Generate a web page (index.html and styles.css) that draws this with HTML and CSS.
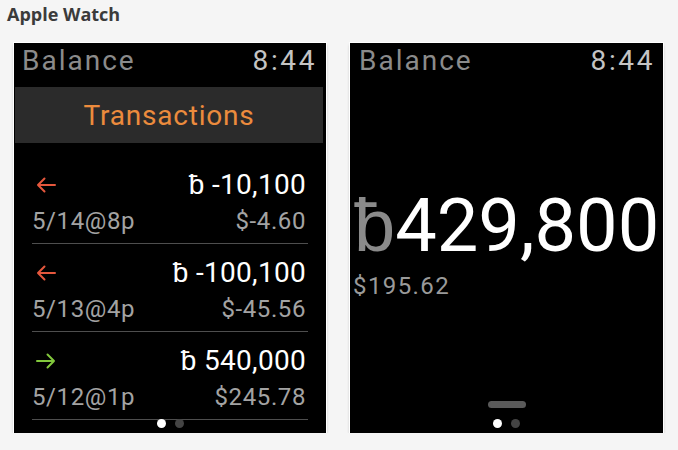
FILE: index.html
```html
<!DOCTYPE html>
<html>
<head>
    <title>Apple Watch</title>
    <meta charset="utf-8">
    <link rel="stylesheet" href="styles.css">
</head>
<body>
<h2 class="section-title">Apple Watch</h2>

<div class="screens">

    <div class="watch">
        <div class="watch-header">
            <span class="title">Balance</span>
            <span class="clock">8:44</span>
        </div>
        <div class="button">Transactions</div>

        <div class="list">
            <div class="row">
                <div class="row-top">
                    <svg class="arrow out" width="20" height="16" viewBox="0 0 20 16"><path d="M19 8H2M8.5 1.5L2 8l6.5 6.5"/></svg>
                    <span class="amount">ƀ -10,100</span>
                </div>
                <div class="row-bottom">
                    <span>5/14@8p</span>
                    <span>$-4.60</span>
                </div>
            </div>
            <div class="row">
                <div class="row-top">
                    <svg class="arrow out" width="20" height="16" viewBox="0 0 20 16"><path d="M19 8H2M8.5 1.5L2 8l6.5 6.5"/></svg>
                    <span class="amount">ƀ -100,100</span>
                </div>
                <div class="row-bottom">
                    <span>5/13@4p</span>
                    <span>$-45.56</span>
                </div>
            </div>
            <div class="row">
                <div class="row-top">
                    <svg class="arrow in" width="20" height="16" viewBox="0 0 20 16"><path d="M1 8h17M11.5 1.5L18 8l-6.5 6.5"/></svg>
                    <span class="amount">ƀ 540,000</span>
                </div>
                <div class="row-bottom">
                    <span>5/12@1p</span>
                    <span>$245.78</span>
                </div>
            </div>
        </div>

        <div class="dots overlay">
            <span class="dot active"></span>
            <span class="dot"></span>
        </div>
    </div>

    <div class="watch balance">
        <div class="watch-header">
            <span class="title">Balance</span>
            <span class="clock">8:44</span>
        </div>
        <div class="big-amount"><span class="currency">ƀ</span>429,800</div>
        <div class="fiat">$195.62</div>

        <div class="footer">
            <span class="pill"></span>
            <div class="dots">
                <span class="dot active"></span>
                <span class="dot"></span>
            </div>
        </div>
    </div>

</div>
</body>
</html>
```

FILE: styles.css
```css
body {
    font-family: Roboto, "Liberation Sans", sans-serif;
    background-color: #f5f5f5;
    color: #333;
    margin: 0;
    padding: 0;
}

.section-title {
    font: bold 18px "Open Sans", "Liberation Sans", sans-serif;
    color: #3b3b3b;
    margin: 0;
    padding: 2px 0 0 7px;
    line-height: 24px;
}

.screens {
    display: flex;
    gap: 24px;
    padding: 17px 0 0 14px;
}

.watch {
    position: relative;
    width: 312px;
    height: 390px;
    background: #000;
    box-shadow: 0 0 0 1px #fff, 0 2px 3px rgba(0, 0, 0, 0.3);
    overflow: hidden;
    display: flex;
    flex-direction: column;
}

.watch.balance {
    width: 313px;
}

.watch-header {
    display: flex;
    justify-content: space-between;
    font-size: 28px;
    line-height: 32px;
    letter-spacing: 2px;
    padding: 2px 9px 0 8px;
}

.balance .watch-header {
    padding: 2px 8px 0 9px;
}

.title {
    color: #8b8b8b;
}

.clock {
    color: #c4c4c4;
    letter-spacing: 2.6px;
}

.button {
    margin: 10px 3px 0 1px;
    height: 56px;
    background: #2b2b2b;
    color: #ec8b3d;
    font-size: 28px;
    line-height: 58px;
    letter-spacing: 0.8px;
    text-align: center;
}

.list {
    padding: 13px 18px 0 18px;
}

.row {
    border-bottom: 1px solid #4e4e4e;
    padding: 13px 0 9px 0;
}

.row-top {
    display: flex;
    justify-content: space-between;
    align-items: center;
    height: 32px;
}

.arrow {
    margin-left: 4px;
    fill: none;
    stroke-width: 2;
    stroke-linecap: round;
    stroke-linejoin: round;
}

.arrow.out {
    stroke: #e5573d;
}

.arrow.in {
    stroke: #82c83c;
}

.amount {
    color: #fff;
    font-size: 28px;
    line-height: 32px;
    letter-spacing: 0.3px;
    margin-right: 2px;
}

.row-bottom {
    display: flex;
    justify-content: space-between;
    margin-top: 7px;
    color: #a3a3a3;
    font-size: 24px;
    line-height: 26px;
    letter-spacing: 0.6px;
    padding-right: 2px;
}

.big-amount {
    color: #fff;
    font-size: 74px;
    line-height: 80px;
    margin-top: 109px;
    padding-left: 4px;
    white-space: nowrap;
}

.currency {
    color: #8a8a8a;
}

.fiat {
    color: #9a9a9a;
    font-size: 24px;
    line-height: 28px;
    letter-spacing: 1.4px;
    margin-top: 6px;
    padding-left: 3px;
}

.footer {
    margin-top: auto;
    display: flex;
    flex-direction: column;
    align-items: center;
    padding-bottom: 5px;
}

.pill {
    width: 38px;
    height: 7px;
    border-radius: 4px;
    background: #5a5a5a;
    margin-bottom: 11px;
}

.dots {
    display: flex;
    gap: 9px;
    justify-content: center;
}

.dots.overlay {
    position: absolute;
    left: 0;
    right: 0;
    bottom: 5px;
}

.dot {
    width: 9px;
    height: 9px;
    border-radius: 50%;
    background: #444;
}

.dot.active {
    background: #fff;
}
```
